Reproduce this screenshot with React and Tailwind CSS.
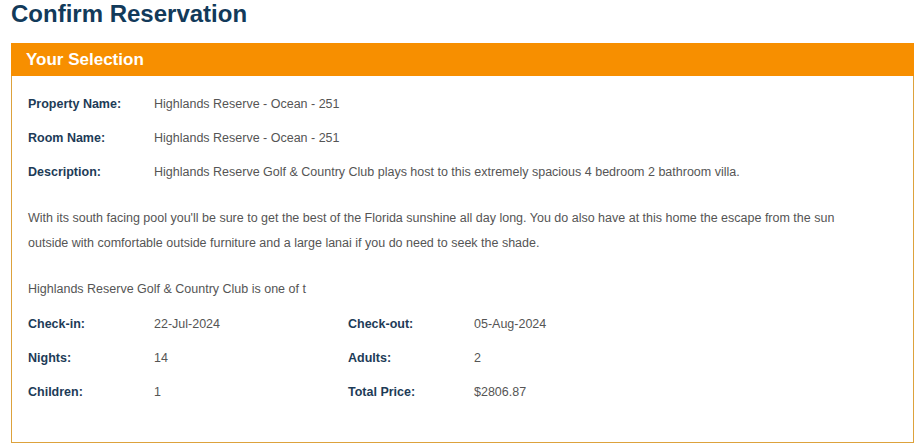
export default function App() {
  const font = { fontFamily: '"Liberation Sans", Arial, sans-serif' };

  const Row = ({ label, value }) => (
    <div className="flex items-center h-[34px]">
      <div className="w-[126px] shrink-0 font-bold text-[#1d3b57]">{label}</div>
      <div className="text-[#555]">{value}</div>
    </div>
  );

  const Pair = ({ label, value }) => (
    <div className="flex items-center h-[34px]">
      <div className="w-[126px] shrink-0 font-bold text-[#1d3b57]">{label}</div>
      <div className="text-[#555]">{value}</div>
    </div>
  );

  return (
    <div className="bg-white min-h-[445px] w-[924px] pl-[11px] pr-[10px]" style={font}>
      <h1 className="text-[24px] font-bold text-[#123a5a] leading-[28px] h-[43px]">
        Confirm Reservation
      </h1>

      <div className="border border-solid border-[#dda23c]">
        <div className="bg-[#f78f00] h-[33px] -m-px mb-0 flex items-center pl-[15px] text-white text-[17px] font-bold">
          Your Selection
        </div>

        <div className="px-[16px] pt-[11px] pb-[33px] text-[12.5px]">
          <Row label="Property Name:" value="Highlands Reserve - Ocean - 251" />
          <Row label="Room Name:" value="Highlands Reserve - Ocean - 251" />
          <Row label="Description:" value="Highlands Reserve Golf & Country Club plays host to this extremely spacious 4 bedroom 2 bathroom villa." />

          <p className="text-[#555] leading-[25px] mt-[17px] pr-[20px]">
            With its south facing pool you'll be sure to get the best of the Florida sunshine all day long. You do also have at this home the escape from the sun outside with comfortable outside furniture and a large lanai if you do need to seek the shade.
          </p>

          <p className="text-[#555] leading-[25px] mt-[21px] mb-[5px]">
            Highlands Reserve Golf &amp; Country Club is one of t
          </p>

          <div className="grid grid-cols-[320px_1fr]">
            <Pair label="Check-in:" value="22-Jul-2024" />
            <Pair label="Check-out:" value="05-Aug-2024" />
            <Pair label="Nights:" value="14" />
            <Pair label="Adults:" value="2" />
            <Pair label="Children:" value="1" />
            <Pair label="Total Price:" value="$2806.87" />
          </div>
        </div>
      </div>
    </div>
  );
}
